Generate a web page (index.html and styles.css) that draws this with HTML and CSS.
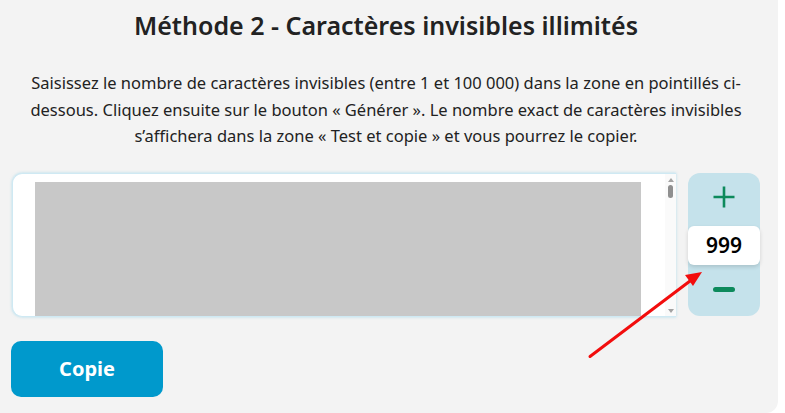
FILE: index.html
```html
<!DOCTYPE html>
<html lang="fr">
<head>
<meta charset="utf-8">
<title>Méthode 2</title>
<link rel="stylesheet" href="styles.css">
</head>
<body>
<div class="card">
  <h2 class="title">Méthode 2 - Caractères invisibles illimités</h2>
  <p class="intro">Saisissez le nombre de caractères invisibles (entre 1 et 100 000) dans la zone en pointillés ci-dessous. Cliquez ensuite sur le bouton « Générer ». Le nombre exact de caractères invisibles s’affichera dans la zone « Test et copie » et vous pourrez le copier.</p>
  <div class="row">
    <div class="field">
      <div class="field-body"><div class="filler"></div></div>
      <div class="scroll">
        <span class="arr up"></span>
        <span class="thumb"></span>
        <span class="spacer"></span>
        <span class="arr down"></span>
      </div>
    </div>
    <div class="stepper">
      <div class="step plus">
        <svg width="24" height="24" viewBox="0 0 24 24"><path d="M12 1.5V22.5M1.5 12H22.5" stroke="#0d8a5c" stroke-width="2.6" fill="none"/></svg>
      </div>
      <div class="count">999</div>
      <div class="step minus"><span class="bar"></span></div>
    </div>
  </div>
  <button class="copy">Copie</button>
  <svg class="annot" width="785" height="413" viewBox="0 0 785 413">
    <line x1="590" y1="356.5" x2="690" y2="281" stroke="#f20d0d" stroke-width="3" stroke-linecap="round"/>
    <polygon points="702,272 685,275 693,286" fill="#f20d0d"/>
  </svg>
</div>
</body>
</html>
```
FILE: styles.css
```css
html, body {
  margin: 0;
  padding: 0;
  background: #ffffff;
}
body {
  font-family: "Noto Sans", "Open Sans", sans-serif;
  color: #222222;
}
.card {
  position: relative;
  width: 778px;
  height: 413px;
  box-sizing: border-box;
  background: #f3f3f3;
  border-radius: 0 0 12px 0;
  padding: 8px 18px 0 12px;
  overflow: hidden;
}
.title {
  margin: 0;
  text-align: center;
  font-size: 25px;
  font-weight: 600;
  line-height: 34px;
  color: #222222;
}
.intro {
  margin: 28px 0 0 0;
  text-align: center;
  font-size: 16.5px;
  line-height: 26.5px;
  color: #222222;
}
.row {
  display: flex;
  gap: 12px;
  margin-top: 23px;
  height: 144px;
}
.field {
  flex: 0 0 664px;
  display: flex;
  background: #ffffff;
  border: 1px solid #cfe9f3;
  border-right: none;
  border-radius: 10px 0 0 10px;
  box-shadow: 0 0 3px rgba(120, 200, 230, 0.55);
  box-sizing: border-box;
  overflow: hidden;
}
.field-body {
  flex: 1;
  padding: 8px 24px 0 22px;
}
.filler {
  height: 200px;
  background: #c8c8c8;
}
.scroll {
  flex: 0 0 11px;
  display: flex;
  flex-direction: column;
  align-items: center;
  background: #fafafa;
  padding: 4px 0 3px;
}
.arr {
  width: 0;
  height: 0;
  border-left: 3px solid transparent;
  border-right: 3px solid transparent;
}
.arr.up { border-bottom: 4px solid #a3a3a3; }
.arr.down { border-top: 4px solid #a3a3a3; }
.thumb {
  width: 5px;
  height: 13px;
  margin-top: 3px;
  border-radius: 3px;
  background: #8f8f8f;
}
.spacer { flex: 1; }
.stepper {
  flex: 0 0 72px;
  display: flex;
  flex-direction: column;
  align-items: stretch;
  background: #c5e2eb;
  border-radius: 12px;
  height: 143px;
}
.step {
  display: flex;
  align-items: center;
  justify-content: center;
}
.plus {
  height: 53px;
  box-sizing: border-box;
  padding-bottom: 4px;
}
.count {
  height: 39px;
  background: #ffffff;
  border-radius: 6px;
  box-shadow: 0 2px 4px rgba(0, 0, 0, 0.14);
  display: flex;
  align-items: center;
  justify-content: center;
  font-size: 21px;
  font-weight: 600;
  color: #000000;
}
.minus {
  flex: 1;
  padding-bottom: 2px;
}
.bar {
  display: block;
  width: 22px;
  height: 5px;
  border-radius: 3px;
  background: #0d8a5c;
}
.copy {
  display: block;
  margin-top: 24px;
  margin-left: -1px;
  width: 152px;
  height: 56px;
  border: none;
  border-radius: 10px;
  background: #0099cc;
  color: #ffffff;
  font-family: "Noto Sans", "Open Sans", sans-serif;
  font-size: 20px;
  font-weight: 700;
  cursor: pointer;
}
.annot {
  position: absolute;
  left: 0;
  top: 0;
  pointer-events: none;
}
```
